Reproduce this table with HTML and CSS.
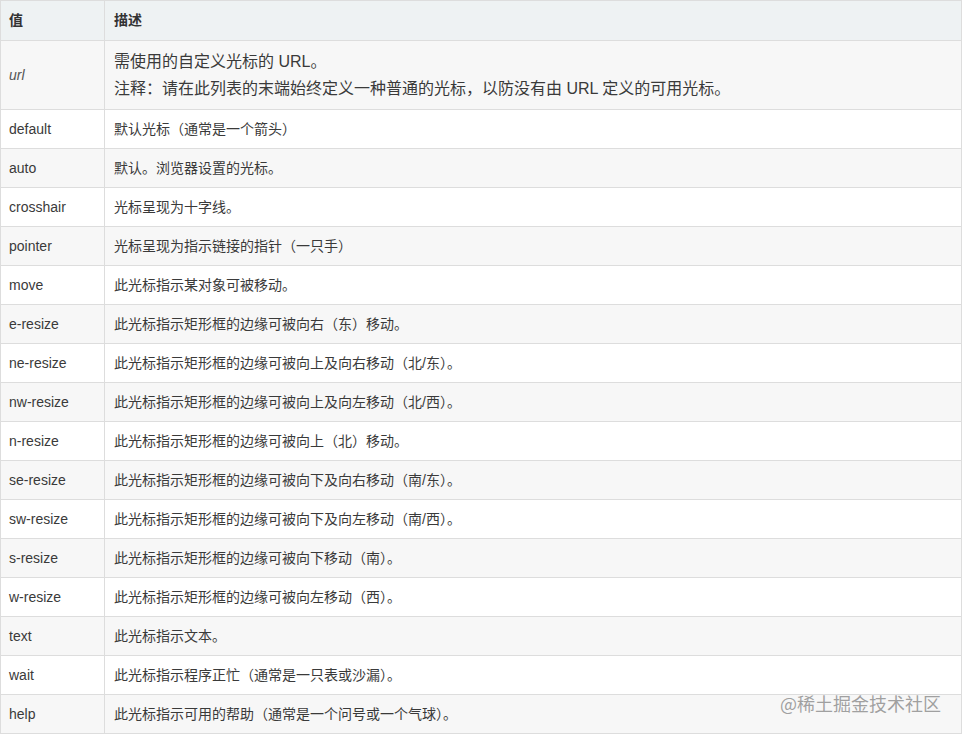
FILE: index.html
```html
<!DOCTYPE html>
<html lang="zh">
<head>
<meta charset="utf-8">
<title>cursor</title>
<link rel="stylesheet" href="styles.css">
</head>
<body>
<div class="wrap">
<table class="tbl">
  <thead>
    <tr><th class="c1">值</th><th>描述</th></tr>
  </thead>
  <tbody>
    <tr class="url-row"><td class="c1"><i>url</i></td><td><p>需使用的自定义光标的 URL。</p><p>注释：请在此列表的末端始终定义一种普通的光标，以防没有由 URL 定义的可用光标。</p></td></tr>
    <tr><td class="c1">default</td><td>默认光标（通常是一个箭头）</td></tr>
    <tr><td class="c1">auto</td><td>默认。浏览器设置的光标。</td></tr>
    <tr><td class="c1">crosshair</td><td>光标呈现为十字线。</td></tr>
    <tr><td class="c1">pointer</td><td>光标呈现为指示链接的指针（一只手）</td></tr>
    <tr><td class="c1">move</td><td>此光标指示某对象可被移动。</td></tr>
    <tr><td class="c1">e-resize</td><td>此光标指示矩形框的边缘可被向右（东）移动。</td></tr>
    <tr><td class="c1">ne-resize</td><td>此光标指示矩形框的边缘可被向上及向右移动（北/东）。</td></tr>
    <tr><td class="c1">nw-resize</td><td>此光标指示矩形框的边缘可被向上及向左移动（北/西）。</td></tr>
    <tr><td class="c1">n-resize</td><td>此光标指示矩形框的边缘可被向上（北）移动。</td></tr>
    <tr><td class="c1">se-resize</td><td>此光标指示矩形框的边缘可被向下及向右移动（南/东）。</td></tr>
    <tr><td class="c1">sw-resize</td><td>此光标指示矩形框的边缘可被向下及向左移动（南/西）。</td></tr>
    <tr><td class="c1">s-resize</td><td>此光标指示矩形框的边缘可被向下移动（南）。</td></tr>
    <tr><td class="c1">w-resize</td><td>此光标指示矩形框的边缘可被向左移动（西）。</td></tr>
    <tr><td class="c1">text</td><td>此光标指示文本。</td></tr>
    <tr><td class="c1">wait</td><td>此光标指示程序正忙（通常是一只表或沙漏）。</td></tr>
    <tr><td class="c1">help</td><td>此光标指示可用的帮助（通常是一个问号或一个气球）。</td></tr>
  </tbody>
</table>
<div class="watermark">@稀土掘金技术社区</div>
</div>
</body>
</html>
```
FILE: styles.css
```css
html, body {
  margin: 0;
  padding: 0;
  background: #fff;
}
.wrap {
  position: relative;
  width: 962px;
}
.tbl {
  width: 962px;
  border-collapse: collapse;
  table-layout: fixed;
  font-family: "Liberation Sans", "Noto Sans CJK SC", sans-serif;
  font-size: 14px;
  color: #3a3a3a;
}
.tbl th, .tbl td {
  border: 1px solid #ddd;
  text-align: left;
  vertical-align: middle;
  padding: 10px 9px;
  line-height: 18px;
}
.tbl th {
  background: #eef2f3;
  font-weight: bold;
  line-height: 19px;
  color: #333;
}
.tbl .c1 {
  width: 87px;
  padding-left: 8px;
  padding-right: 8px;
}
.tbl tbody tr:nth-child(odd) td {
  background: #f7f7f7;
}
.tbl tbody tr:nth-child(even) td {
  background: #fff;
}
.url-row td {
  padding-top: 7px;
  padding-bottom: 7px;
}
.url-row td i {
  color: #555;
}
.url-row p {
  margin: 0;
  font-size: 16px;
  line-height: 27px;
}
.watermark {
  position: absolute;
  right: 21px;
  bottom: 19px;
  font-family: "Noto Sans CJK SC", sans-serif;
  font-size: 18px;
  line-height: 24px;
  color: #a0a0a0;
  text-shadow: 0 0 1px #fff;
}
```
